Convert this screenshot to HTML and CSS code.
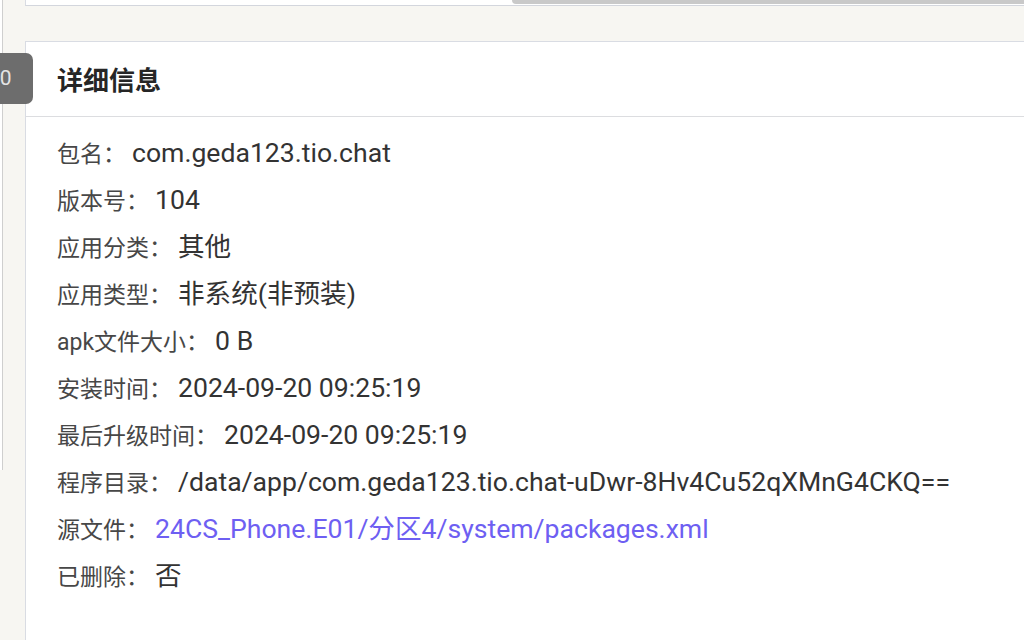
FILE: index.html
```html
<!DOCTYPE html>
<html lang="zh-CN">
<head>
<meta charset="utf-8">
<title>详细信息</title>
<link rel="stylesheet" href="styles.css">
</head>
<body>
<div class="page">
  <div class="rail"></div>
  <main class="main">
    <div class="top-card"></div>
    <section class="card">
      <header class="card-head">
        <h2 class="card-title">详细信息</h2>
      </header>
      <div class="card-body">
        <div class="row"><span class="label">包名：</span><span class="value">com.geda123.tio.chat</span></div>
        <div class="row"><span class="label">版本号：</span><span class="value">104</span></div>
        <div class="row"><span class="label">应用分类：</span><span class="value">其他</span></div>
        <div class="row"><span class="label">应用类型：</span><span class="value">非系统(非预装)</span></div>
        <div class="row"><span class="label">apk文件大小：</span><span class="value">0 B</span></div>
        <div class="row"><span class="label">安装时间：</span><span class="value">2024-09-20 09:25:19</span></div>
        <div class="row"><span class="label">最后升级时间：</span><span class="value">2024-09-20 09:25:19</span></div>
        <div class="row"><span class="label">程序目录：</span><span class="value">/data/app/com.geda123.tio.chat-uDwr-8Hv4Cu52qXMnG4CKQ==</span></div>
        <div class="row"><span class="label">源文件：</span><a class="value link" href="#">24CS_Phone.E01/分区4/system/packages.xml</a></div>
        <div class="row"><span class="label">已删除：</span><span class="value">否</span></div>
      </div>
    </section>
  </main>
</div>
<div class="scroll-thumb"></div>
<div class="side-badge"><span class="side-badge-text">20</span></div>
</body>
</html>
```

FILE: styles.css
```css
html, body {
  margin: 0;
  padding: 0;
}

body {
  width: 1024px;
  height: 640px;
  overflow: hidden;
  background: #f7f6f2;
  font-family: Roboto, "Noto Sans CJK SC", sans-serif;
  position: relative;
}

.page {
  display: flex;
  align-items: flex-start;
  height: 640px;
  overflow: hidden;
}

.rail {
  width: 2px;
  height: 470px;
  background: #ffffff;
  border-right: 1px solid #cfcfcf;
  flex: none;
}

.main {
  flex: 1;
  margin-left: 22px;
  min-width: 0;
}

.top-card {
  height: 5px;
  background: #ffffff;
  border-left: 1px solid #d9dce3;
  border-bottom: 1px solid #d3d6dd;
}

.card {
  box-sizing: border-box;
  margin-top: 35px;
  background: #ffffff;
  border-top: 1px solid #d9dce3;
  border-left: 1px solid #d9dce3;
  height: 599px;
}

.card-head {
  height: 74px;
  border-bottom: 1px solid #dcdde0;
  display: flex;
  align-items: center;
  padding-left: 31px;
}

.card-title {
  margin: 0;
  font-size: 26px;
  font-weight: 700;
  color: #262626;
  font-family: "Noto Sans CJK SC", sans-serif;
  line-height: 1;
}

.card-body {
  padding: 12px 0 0 31px;
}

.row {
  display: flex;
  align-items: baseline;
  height: 47px;
  line-height: 47px;
  white-space: nowrap;
}

.label {
  font-size: 23px;
  color: #474747;
  margin-right: 6px;
}

.value {
  font-size: 26.6px;
  color: #333333;
}

.link {
  color: #6e5ff2;
  text-decoration: none;
}

.scroll-thumb {
  position: absolute;
  top: 0;
  left: 512px;
  right: 0;
  height: 4px;
  background: #c9c9c9;
  border-bottom-left-radius: 4px;
}

.side-badge {
  position: absolute;
  left: 0;
  top: 53px;
  width: 33px;
  height: 51px;
  background: #6d6d6d;
  border-radius: 0 7px 7px 0;
  overflow: hidden;
}

.side-badge-text {
  position: absolute;
  left: -12px;
  top: 0;
  line-height: 51px;
  font-size: 21px;
  color: #e4e4e4;
}
```
